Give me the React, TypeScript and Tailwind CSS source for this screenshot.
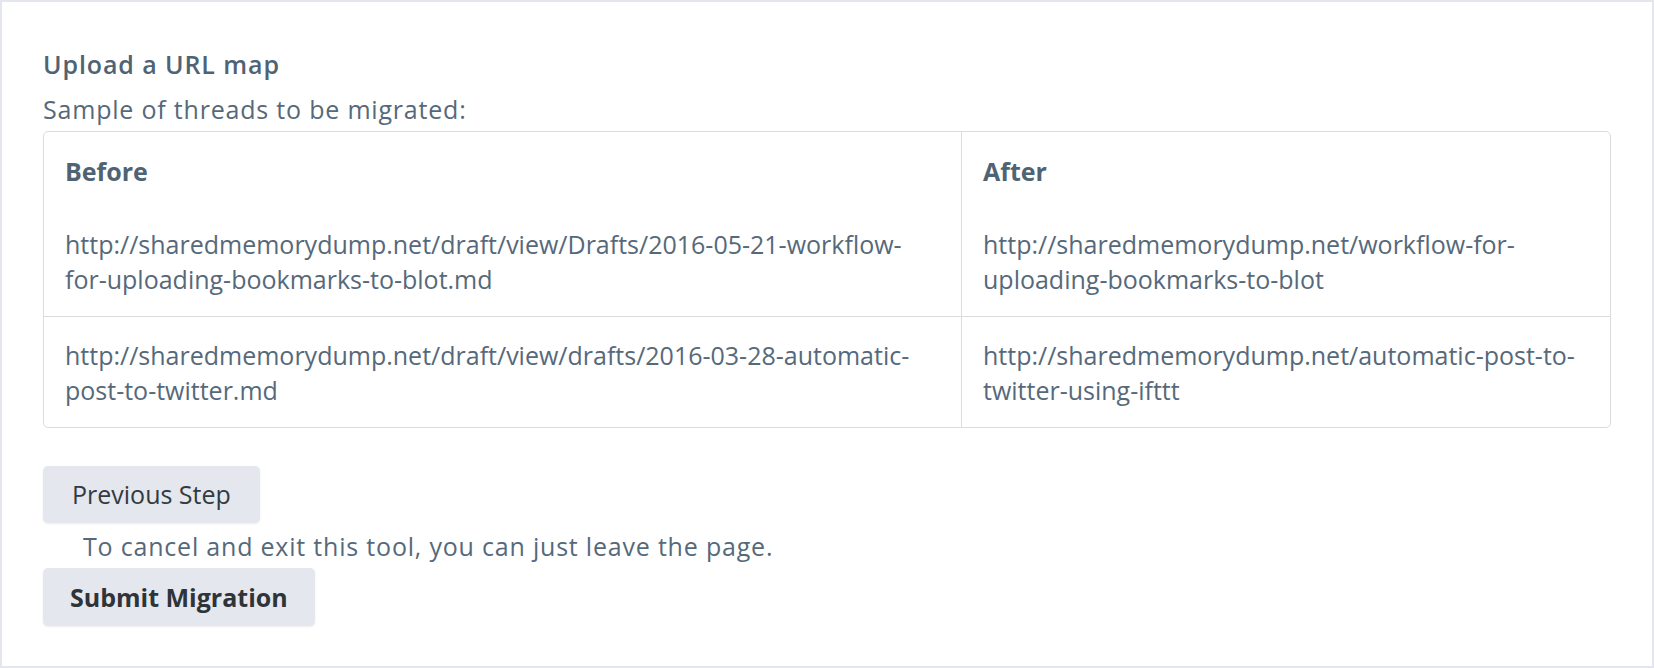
import React from "react";

const rows = [
  {
    before: ["http://sharedmemorydump.net/draft/view/Drafts/2016-05-21-workflow-", "for-uploading-bookmarks-to-blot.md"],
    after: ["http://sharedmemorydump.net/workflow-for-", "uploading-bookmarks-to-blot"],
  },
  {
    before: ["http://sharedmemorydump.net/draft/view/drafts/2016-03-28-automatic-", "post-to-twitter.md"],
    after: ["http://sharedmemorydump.net/automatic-post-to-", "twitter-using-ifttt"],
  },
];

function Lines({ lines }: { lines: string[] }) {
  return (
    <>
      {lines.map((l, i) => (
        <div key={i} className="whitespace-nowrap">
          {l}
        </div>
      ))}
    </>
  );
}

export default function App() {
  return (
    <div
      className="min-h-[668px] w-[1654px] border-2 border-[#e3e7ed] bg-white pl-[41px] pr-[41px] pt-[45px] pb-[38px] text-[25px] leading-[35px] text-[#56697a]"
      style={{ fontFamily: "'Open Sans', 'Noto Sans', sans-serif" }}
    >
      <h3 className="font-semibold tracking-[0.9px] text-[#4f6373]">Upload a URL map</h3>
      <p className="mt-[10px] tracking-[0.8px]">Sample of threads to be migrated:</p>
      <div className="mt-[4px] overflow-hidden rounded-[5px] border border-[#dcdcdc]">
        <div className="grid grid-cols-[917px_1fr]">
          <div className="px-[21px] pt-[22px] pb-[17px] font-bold text-[#4f6373]">Before</div>
          <div className="border-l border-[#dcdcdc] px-[21px] pt-[22px] pb-[17px] font-bold text-[#4f6373]">After</div>
          {rows.map((r, i) => (
            <React.Fragment key={i}>
              <div className={`px-[21px] pt-[21px] pb-[19px] ${i > 0 ? "border-t border-[#dcdcdc]" : ""}`}>
                <Lines lines={r.before} />
              </div>
              <div className={`border-l border-[#dcdcdc] px-[21px] pt-[21px] pb-[19px] ${i > 0 ? "border-t" : ""}`}>
                <Lines lines={r.after} />
              </div>
            </React.Fragment>
          ))}
        </div>
      </div>
      <button className="mt-[38px] flex h-[57px] items-center rounded-[5px] bg-[#e4e7ee] px-[29px] text-[25px] text-[#333a40] shadow-[0_1px_2px_rgba(0,0,0,0.08)]">
        Previous Step
      </button>
      <p className="mt-[6px] pl-[40px] tracking-[0.8px]">To cancel and exit this tool, you can just leave the page.</p>
      <button className="mt-[4px] flex h-[58px] items-center rounded-[5px] bg-[#e4e7ee] px-[27px] text-[25px] font-bold text-[#2f3438] shadow-[0_1px_2px_rgba(0,0,0,0.08)]">
        Submit Migration
      </button>
    </div>
  );
}
